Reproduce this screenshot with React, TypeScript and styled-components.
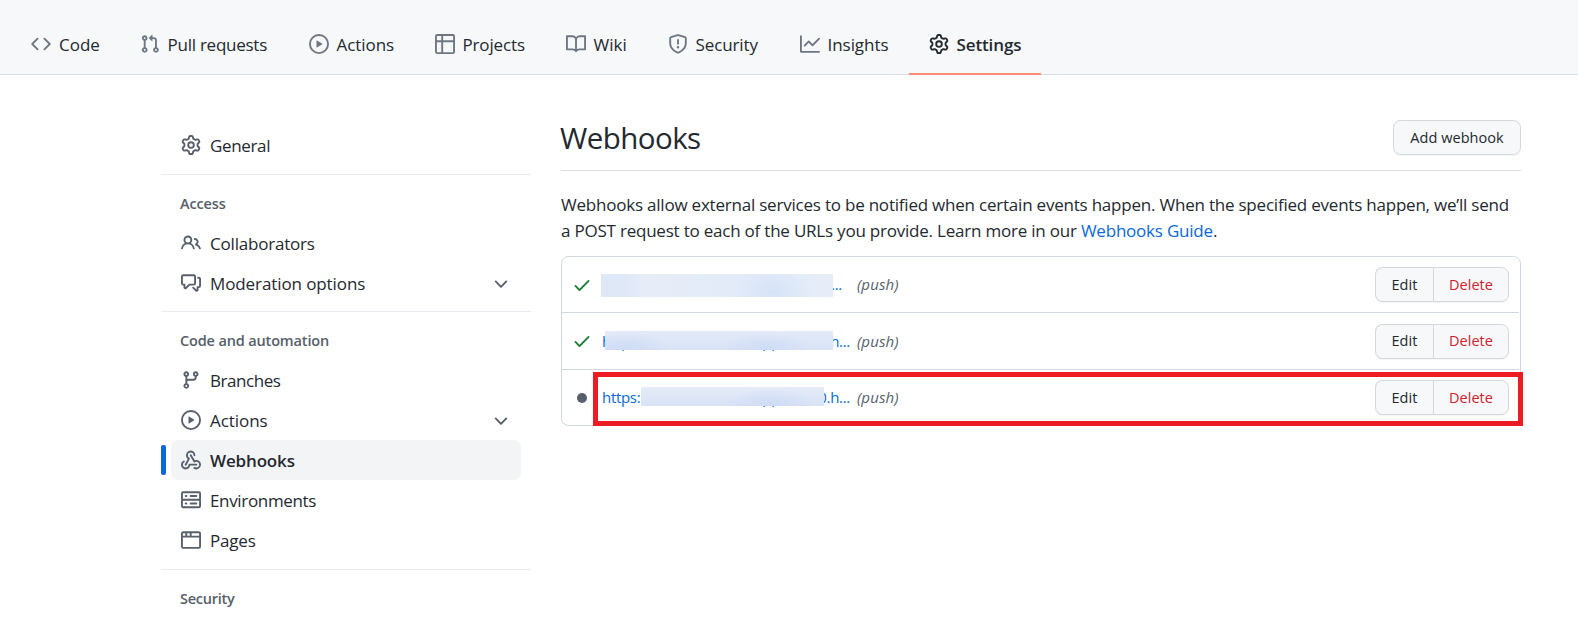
import React from "react";
import styled, { createGlobalStyle, css } from "styled-components";

const GlobalStyle = createGlobalStyle`
  *, *::before, *::after { box-sizing: border-box; }
  body {
    margin: 0;
    background: #fff;
    color: #24292f;
    font-family: "Open Sans", "Noto Sans", sans-serif;
    font-size: 17px;
    font-weight: 400;
  }
`;

/* ---------- icons ---------- */

const paths = {
  code: "M4.72 3.22a.75.75 0 011.06 1.06L2.06 8l3.72 3.72a.75.75 0 11-1.06 1.06L.47 8.53a.75.75 0 010-1.06l4.25-4.25zm6.56 0a.75.75 0 10-1.06 1.06L13.94 8l-3.72 3.72a.75.75 0 101.06 1.06l4.25-4.25a.75.75 0 000-1.06l-4.25-4.25z",
  pull: "M7.177 3.073L9.573.677A.25.25 0 0110 .854v4.792a.25.25 0 01-.427.177L7.177 3.427a.25.25 0 010-.354zM3.75 2.5a.75.75 0 100 1.5.75.75 0 000-1.5zm-2.25.75a2.25 2.25 0 113 2.122v5.256a2.251 2.251 0 11-1.5 0V5.372A2.25 2.25 0 011.5 3.25zM11 2.5h-1V4h1a1 1 0 011 1v5.628a2.251 2.251 0 101.5 0V5A2.5 2.5 0 0011 2.5zm1 10.25a.75.75 0 111.5 0 .75.75 0 01-1.5 0zM3.75 12a.75.75 0 100 1.5.75.75 0 000-1.5z",
  play: "M1.5 8a6.5 6.5 0 1113 0 6.5 6.5 0 01-13 0zM8 0a8 8 0 100 16A8 8 0 008 0zM6.379 5.227A.25.25 0 006 5.442v5.117a.25.25 0 00.379.214l4.264-2.559a.25.25 0 000-.428L6.379 5.227z",
  table: "M1.75 0A1.75 1.75 0 000 1.75v12.5C0 15.216.784 16 1.75 16h12.5A1.75 1.75 0 0016 14.25V1.75A1.75 1.75 0 0014.25 0H1.75zM1.5 6.5v7.75c0 .138.112.25.25.25H5v-8H1.5zM6.5 6.5v8h7.75a.25.25 0 00.25-.25V6.5h-8zM14.5 5V1.75a.25.25 0 00-.25-.25H6.5V5h8zM5 5V1.5H1.75a.25.25 0 00-.25.25V5H5z",
  book: "M0 1.75A.75.75 0 01.75 1h4.253c1.227 0 2.317.59 3 1.501A3.744 3.744 0 0111.006 1h4.245a.75.75 0 01.75.75v10.5a.75.75 0 01-.75.75h-4.507a2.25 2.25 0 00-1.591.659l-.622.621a.75.75 0 01-1.06 0l-.622-.621A2.25 2.25 0 005.258 13H.75a.75.75 0 01-.75-.75V1.75zm8.755 3a2.25 2.25 0 012.25-2.25H14.5v9h-3.757c-.71 0-1.4.201-1.992.572l.004-7.322zm-1.504 7.324l.004-5.073-.002-2.253A2.25 2.25 0 005.003 2.5H1.5v9h3.757a3.75 3.75 0 011.994.574z",
  shield: "M7.467.133a1.75 1.75 0 011.066 0l5.25 1.68A1.75 1.75 0 0115 3.48V7c0 1.566-.32 3.182-1.303 4.682-.983 1.498-2.585 2.813-5.032 3.855a1.7 1.7 0 01-1.33 0c-2.447-1.042-4.049-2.357-5.032-3.855C1.32 10.182 1 8.566 1 7V3.48a1.75 1.75 0 011.217-1.667l5.25-1.68zm.61 1.429a.25.25 0 00-.153 0l-5.25 1.68a.25.25 0 00-.174.238V7c0 1.358.275 2.666 1.057 3.86.784 1.194 2.121 2.34 4.366 3.297a.2.2 0 00.154 0c2.245-.956 3.582-2.104 4.366-3.298C13.225 9.666 13.5 8.36 13.5 7V3.48a.25.25 0 00-.174-.237l-5.25-1.68zM9 10.5a1 1 0 11-2 0 1 1 0 012 0zm-.25-5.75a.75.75 0 10-1.5 0v3a.75.75 0 001.5 0v-3z",
  graph: "M1.5 1.75a.75.75 0 00-1.5 0v12.5c0 .414.336.75.75.75h14.5a.75.75 0 000-1.5H1.5V1.75zm14.28 2.53a.75.75 0 00-1.06-1.06L10 7.94 7.53 5.47a.75.75 0 00-1.06 0L3.22 8.72a.75.75 0 001.06 1.06L7 7.06l2.47 2.47a.75.75 0 001.06 0l5.25-5.25z",
  gear: "M7.429 1.525a6.593 6.593 0 011.142 0c.036.003.108.036.137.146l.289 1.105c.147.56.55.967.997 1.189.174.086.341.183.501.29.417.278.97.423 1.53.27l1.102-.303c.11-.03.175.016.195.046.219.31.41.641.573.989.014.031.022.11-.059.19l-.815.806c-.411.406-.562.957-.53 1.456a4.588 4.588 0 010 .582c-.032.499.119 1.05.53 1.456l.815.806c.08.08.073.159.059.19a6.494 6.494 0 01-.573.99c-.02.029-.086.074-.195.045l-1.103-.303c-.559-.153-1.112-.008-1.529.27-.16.107-.327.204-.5.29-.449.222-.851.628-.998 1.189l-.289 1.105c-.029.11-.101.143-.137.146a6.613 6.613 0 01-1.142 0c-.036-.003-.108-.037-.137-.146l-.289-1.105c-.147-.56-.55-.967-.997-1.189a4.502 4.502 0 01-.501-.29c-.417-.278-.97-.423-1.53-.27l-1.102.303c-.11.03-.175-.016-.195-.046a6.492 6.492 0 01-.573-.989c-.014-.031-.022-.11.059-.19l.815-.806c.411-.406.562-.957.53-1.456a4.587 4.587 0 010-.582c.032-.499-.119-1.05-.53-1.456l-.815-.806c-.08-.08-.073-.159-.059-.19a6.44 6.44 0 01.573-.99c.02-.029.086-.075.195-.045l1.103.303c.559.153 1.112.008 1.529-.27.16-.107.327-.204.5-.29.449-.222.851-.628.998-1.189l.289-1.105c.029-.11.101-.143.137-.146zM8 0c-.236 0-.47.01-.701.03-.743.065-1.29.615-1.458 1.261l-.29 1.106c-.017.066-.078.158-.211.224a5.994 5.994 0 00-.668.386c-.123.082-.233.09-.3.071L3.27 2.776c-.644-.177-1.392.02-1.82.63a7.977 7.977 0 00-.704 1.217c-.315.675-.111 1.422.363 1.891l.815.806c.05.048.098.147.088.294a6.084 6.084 0 000 .772c.01.147-.038.246-.088.294l-.815.806c-.474.469-.678 1.216-.363 1.891.2.428.436.835.704 1.218.428.609 1.176.806 1.82.63l1.103-.303c.066-.019.176-.011.299.071.213.143.436.272.668.386.133.066.194.158.212.224l.289 1.106c.169.646.715 1.196 1.458 1.26a8.094 8.094 0 001.402 0c.743-.064 1.29-.614 1.458-1.26l.29-1.106c.017-.066.078-.158.211-.224a5.98 5.98 0 00.668-.386c.123-.082.233-.09.3-.071l1.102.302c.644.177 1.392-.02 1.82-.63.268-.382.505-.789.704-1.217.315-.675.111-1.422-.364-1.891l-.814-.806c-.05-.048-.098-.147-.088-.294a6.1 6.1 0 000-.772c-.01-.147.039-.246.088-.294l.814-.806c.475-.469.679-1.216.364-1.891a7.992 7.992 0 00-.704-1.218c-.428-.609-1.176-.806-1.82-.63l-1.103.303c-.066.019-.176.011-.299-.071a5.991 5.991 0 00-.668-.386c-.133-.066-.194-.158-.212-.224L10.16 1.29C9.99.645 9.444.095 8.701.031A8.094 8.094 0 008 0zm1.5 8a1.5 1.5 0 11-3 0 1.5 1.5 0 013 0zM11 8a3 3 0 11-6 0 3 3 0 016 0z",
  people: "M5.5 3.5a2 2 0 100 4 2 2 0 000-4zM2 5.5a3.5 3.5 0 115.898 2.549 5.507 5.507 0 013.034 4.084.75.75 0 11-1.482.235 4.001 4.001 0 00-7.9 0 .75.75 0 01-1.482-.236A5.507 5.507 0 013.102 8.05 3.49 3.49 0 012 5.5zM11 4a.75.75 0 100 1.5 1.5 1.5 0 01.666 2.844.75.75 0 00-.416.672v.352a.75.75 0 00.574.73c1.2.289 2.162 1.2 2.522 2.372a.75.75 0 101.434-.44 5.01 5.01 0 00-2.56-3.012A3 3 0 0011 4z",
  discussion: "M1.5 2.75a.25.25 0 01.25-.25h8.5a.25.25 0 01.25.25v5.5a.25.25 0 01-.25.25h-3.5a.75.75 0 00-.53.22L3.5 11.44V9.25a.75.75 0 00-.75-.75h-1a.25.25 0 01-.25-.25v-5.5zM1.75 1A1.75 1.75 0 000 2.75v5.5C0 9.216.784 10 1.75 10H2v1.543a1.457 1.457 0 002.487 1.03L7.061 10h3.189A1.75 1.75 0 0012 8.25v-5.5A1.75 1.75 0 0010.25 1h-8.5zM14.5 4.75a.25.25 0 00-.25-.25h-.5a.75.75 0 110-1.5h.5c.966 0 1.75.784 1.75 1.75v5.5A1.75 1.75 0 0114.25 12H14v1.543a1.457 1.457 0 01-2.487 1.03L9.22 12.28a.75.75 0 111.06-1.06l2.22 2.22v-2.19a.75.75 0 01.75-.75h1a.25.25 0 00.25-.25v-5.5z",
  branch: "M11.75 2.5a.75.75 0 100 1.5.75.75 0 000-1.5zm-2.25.75a2.25 2.25 0 113 2.122V6A2.5 2.5 0 0110 8.5H6a1 1 0 00-1 1v1.128a2.251 2.251 0 11-1.5 0V5.372a2.25 2.25 0 111.5 0v1.836A2.492 2.492 0 016 7h4a1 1 0 001-1v-.628A2.25 2.25 0 019.5 3.25zM4.25 12a.75.75 0 100 1.5.75.75 0 000-1.5zM3.5 3.25a.75.75 0 111.5 0 .75.75 0 01-1.5 0z",
  webhook: "M5.5 4.25a2.25 2.25 0 014.5 0 .75.75 0 001.5 0 3.75 3.75 0 10-6.14 2.889l-2.272 4.258a.75.75 0 001.324.706L7 7.25a.75.75 0 00-.309-1.015A2.25 2.25 0 015.5 4.25zM7.364 3.607a.75.75 0 011.03.257l2.608 4.349a3.75 3.75 0 11-.628 6.785.75.75 0 01.752-1.299 2.25 2.25 0 10-.033-3.88.75.75 0 01-1.03-.256L7.107 4.636a.75.75 0 01.257-1.03zM2.9 8.776A.75.75 0 012.625 9.8 2.25 2.25 0 106 11.75a.75.75 0 01.75-.751h5.5a.75.75 0 010 1.5H7.425a3.751 3.751 0 11-5.55-3.998.75.75 0 011.024.274z",
  server: "M1.75 1A1.75 1.75 0 000 2.75v4c0 .372.116.717.314 1a1.742 1.742 0 00-.314 1v4c0 .966.784 1.75 1.75 1.75h12.5A1.75 1.75 0 0016 12.75v-4c0-.372-.116-.717-.314-1 .198-.283.314-.628.314-1v-4A1.75 1.75 0 0014.25 1H1.75zm0 7.5a.25.25 0 00-.25.25v4c0 .138.112.25.25.25h12.5a.25.25 0 00.25-.25v-4a.25.25 0 00-.25-.25H1.75zM1.5 2.75a.25.25 0 01.25-.25h12.5a.25.25 0 01.25.25v4a.25.25 0 01-.25.25H1.75a.25.25 0 01-.25-.25v-4zm5.5 2A.75.75 0 017.75 4h4.5a.75.75 0 010 1.5h-4.5A.75.75 0 017 4.75zM7.75 10a.75.75 0 000 1.5h4.5a.75.75 0 000-1.5h-4.5zM3 4.75A.75.75 0 013.75 4h.5a.75.75 0 010 1.5h-.5A.75.75 0 013 4.75zM3.75 10a.75.75 0 000 1.5h.5a.75.75 0 000-1.5h-.5z",
  browser: "M0 2.75C0 1.784.784 1 1.75 1h12.5c.966 0 1.75.784 1.75 1.75v10.5A1.75 1.75 0 0114.25 15H1.75A1.75 1.75 0 010 13.25V2.75zm1.75-.25a.25.25 0 00-.25.25V4.5h2v-2H1.75zM5 2.5v2h2v-2H5zm3.5 0v2h6V2.75a.25.25 0 00-.25-.25H8.5zm6 3.5h-13v7.25c0 .138.112.25.25.25h12.5a.25.25 0 00.25-.25V6z",
  chevron: "M12.78 6.22a.75.75 0 010 1.06l-4.25 4.25a.75.75 0 01-1.06 0L3.22 7.28a.75.75 0 011.06-1.06L8 9.94l3.72-3.72a.75.75 0 011.06 0z",
  check: "M13.78 4.22a.75.75 0 010 1.06l-7.25 7.25a.75.75 0 01-1.06 0L2.22 9.28a.75.75 0 011.06-1.06L6 10.94l6.72-6.72a.75.75 0 011.06 0z",
  dot: "M8 4a4 4 0 100 8 4 4 0 000-8z",
};
type IconName = keyof typeof paths;

const Svg = styled.svg`
  display: block;
  flex: none;
  width: 20px;
  height: 20px;
  fill: currentColor;
`;

const Icon = ({ name }: { name: IconName }) => (
  <Svg viewBox="0 0 16 16" aria-hidden="true">
    <path fillRule="evenodd" d={paths[name]} />
  </Svg>
);

/* ---------- top navigation ---------- */

const TopNav = styled.nav`
  display: flex;
  height: 75px;
  padding: 14px 0 0 11px;
  background: #f6f8fa;
  border-bottom: 1px solid #d8dee4;
`;

const Tab = styled.a<{ $active?: boolean }>`
  display: flex;
  align-items: center;
  gap: 8px;
  height: 61px;
  padding: 0 20px;
  border-bottom: 2px solid ${(p) => (p.$active ? "#fd8c73" : "transparent")};
  font-weight: ${(p) => (p.$active ? 600 : 400)};
  ${Svg} {
    color: ${(p) => (p.$active ? "#24292f" : "#6e7781")};
  }
`;

const TabLabel = styled.span<{ $width: number; $track: number }>`
  width: ${(p) => p.$width}px;
  padding-top: 2px;
  white-space: nowrap;
  letter-spacing: ${(p) => p.$track}px;
  line-height: 26px;
`;

/* ---------- page ---------- */

const Page = styled.div`
  display: flex;
  gap: 30px;
  padding: 0 57px 0 161px;
  height: 551px;
  overflow: hidden;
`;

const Sidebar = styled.aside`
  flex: none;
  width: 370px;
  padding-top: 50px;
`;

const Group = styled.section`
  padding-bottom: 9px;
  & + & {
    border-top: 1px solid #e7ebef;
  }
  &:nth-child(2) {
    padding-bottom: 8px;
  }
`;

const GroupTitle = styled.h3<{ $track: number }>`
  margin: 0;
  height: 48px;
  padding: 18px 20px 0 19px;
  font-size: 14.5px;
  line-height: 22px;
  font-weight: 600;
  color: #57606a;
  letter-spacing: ${(p) => p.$track}px;
`;

const NavItem = styled.a<{ $active?: boolean; $track: number }>`
  position: relative;
  display: flex;
  align-items: center;
  gap: 9px;
  height: 40px;
  margin: 0 10px;
  padding: 0 10px;
  border-radius: 7.5px;
  letter-spacing: ${(p) => p.$track}px;
  ${Svg} {
    color: #57606a;
  }
  ${(p) =>
    p.$active &&
    css`
      background: #f3f4f6;
      font-weight: 600;
      &::before {
        content: "";
        position: absolute;
        left: -10px;
        top: 5px;
        width: 5px;
        height: 30px;
        border-radius: 2px;
        background: #0969da;
      }
    `}
`;

const NavLabel = styled.span`
  flex: 1;
  padding-top: 1px;
  line-height: 26px;
`;

const Main = styled.main`
  flex: 1;
  min-width: 0;
  padding-top: 45px;
`;

const Heading = styled.header`
  display: flex;
  justify-content: space-between;
  height: 51px;
  border-bottom: 1px solid #d8dee4;
`;

const Title = styled.h1`
  margin: 0 0 0 -1px;
  font-size: 29.5px;
  line-height: 35px;
  font-weight: 400;
  letter-spacing: -0.55px;
`;

const Button = styled.button<{ $danger?: boolean; $width: number }>`
  width: ${(p) => p.$width}px;
  height: 35px;
  padding: 0;
  border: 1px solid #d5d8da;
  border-radius: 7.5px;
  background: #f6f8fa;
  box-shadow: 0 1px 0 rgba(27, 31, 36, 0.04);
  color: ${(p) => (p.$danger ? "#cf222e" : "#24292f")};
  font: 500 14.5px/22px "Open Sans", "Noto Sans", sans-serif;
  letter-spacing: 0.05px;
`;

const ButtonGroup = styled.div`
  display: flex;
  ${Button}:first-child {
    border-radius: 7.5px 0 0 7.5px;
    border-right: 0;
  }
  ${Button}:last-child {
    border-radius: 0 7.5px 7.5px 0;
  }
`;

const Intro = styled.p`
  margin: 21px 0 12px;
  line-height: 26px;
  letter-spacing: -0.215px;
  white-space: nowrap;
`;

const Link = styled.a`
  color: #0969da;
`;

const HookList = styled.div`
  position: relative;
  height: 170px;
  border: 1px solid #d0d7de;
  border-radius: 7.5px;
`;

const HookRow = styled.div`
  display: flex;
  align-items: center;
  height: 55px;
  margin-right: 1px;
  padding: 0 10px;
  & + & {
    height: 57px;
    border-top: 1px solid #d0d7de;
  }
  & + & + & {
    height: 56px;
  }
`;

const Status = styled.span<{ $ok: boolean }>`
  display: flex;
  width: 30px;
  color: ${(p) => (p.$ok ? "#1a7f37" : "#57606a")};
`;

const HookUrl = styled.a`
  position: relative;
  display: flex;
  width: 248px;
  margin: 0 7px 1px 0;
  font-size: 15px;
  line-height: 22px;
  letter-spacing: -0.3px;
  color: #0969da;
`;

const UrlMiddle = styled.span`
  flex: 1;
  padding-left: 122px;
`;

const UrlEnd = styled.span<{ $tail: number }>`
  margin-right: ${(p) => p.$tail}px;
`;

const Redaction = styled.span<{ $left: number; $width: number; $top: number; $height: number; $fill: string }>`
  position: absolute;
  left: ${(p) => p.$left}px;
  top: ${(p) => p.$top}px;
  width: ${(p) => p.$width}px;
  height: ${(p) => p.$height}px;
  background: ${(p) => p.$fill};
`;

const EventName = styled.em`
  flex: 1;
  margin-bottom: 1px;
  font-size: 15px;
  line-height: 22px;
  letter-spacing: 0.1px;
  color: #57606a;
`;

const Highlight = styled.div`
  position: absolute;
  left: 31px;
  top: 115px;
  width: 930px;
  height: 54px;
  border: 5px solid #ed1c24;
`;

const tabs: { icon: IconName; label: string; width: number; track: number; active?: boolean }[] = [
  { icon: "code", label: "Code", width: 40.5, track: 0 },
  { icon: "pull", label: "Pull requests", width: 101, track: -0.25 },
  { icon: "play", label: "Actions", width: 58, track: -0.05 },
  { icon: "table", label: "Projects", width: 63, track: -0.15 },
  { icon: "book", label: "Wiki", width: 34, track: 0 },
  { icon: "shield", label: "Security", width: 64, track: -0.12 },
  { icon: "graph", label: "Insights", width: 61, track: -0.05 },
  { icon: "gear", label: "Settings", width: 64, track: -0.12, active: true },
];

type Item = { icon: IconName; label: string; track: number; active?: boolean; expandable?: boolean };
const groups: { title?: string; track?: number; items: Item[] }[] = [
  { items: [{ icon: "gear", label: "General", track: -0.35 }] },
  {
    title: "Access",
    track: -0.15,
    items: [
      { icon: "people", label: "Collaborators", track: -0.2 },
      { icon: "discussion", label: "Moderation options", track: -0.1, expandable: true },
    ],
  },
  {
    title: "Code and automation",
    track: -0.15,
    items: [
      { icon: "branch", label: "Branches", track: -0.45 },
      { icon: "play", label: "Actions", track: -0.05, expandable: true },
      { icon: "webhook", label: "Webhooks", track: -0.15, active: true },
      { icon: "server", label: "Environments", track: -0.34 },
      { icon: "browser", label: "Pages", track: -0.2 },
    ],
  },
  { title: "Security", track: -0.25, items: [] },
];

const hooks = [
  {
    ok: true,
    start: "", middle: "", end: "...", tail: 8,
    left: -1, width: 232, top: 1, height: 23,
    fill: "radial-gradient(ellipse 40px 26px at 74% 75%, rgba(212,226,247,.9), rgba(212,226,247,0)), linear-gradient(90deg, #dfe8f7 0%, #dfe8f7 10%, #e6ecf8 18%, #e3ebf8 62%, #e6edf8 100%)",
  },
  {
    ok: true,
    start: "https:", middle: "pp", end: "0.h...", tail: 0,
    left: 3, width: 228, top: 1.5, height: 19,
    fill: "radial-gradient(ellipse 46px 16px at 71% 90%, rgba(205,219,246,.9), rgba(205,219,246,0)), radial-gradient(ellipse 46px 16px at 9% 90%, rgba(205,219,246,.9), rgba(205,219,246,0)), linear-gradient(180deg, #e3ebf8, #d9e3f6)",
  },
  {
    ok: false,
    start: "https:", middle: "pp", end: "0.h...", tail: 0,
    left: 39, width: 183, top: 1, height: 19,
    fill: "radial-gradient(ellipse 46px 16px at 71% 90%, rgba(205,219,246,.9), rgba(205,219,246,0)), linear-gradient(180deg, #e5ecf8, #d9e3f6)",
  },
];

export default function App() {
  return (
    <>
      <GlobalStyle />
      <TopNav>
        {tabs.map((t) => (
          <Tab key={t.label} $active={t.active}>
            <Icon name={t.icon} />
            <TabLabel $width={t.width} $track={t.track}>{t.label}</TabLabel>
          </Tab>
        ))}
      </TopNav>
      <Page>
        <Sidebar>
          {groups.map((g, i) => (
            <Group key={i}>
              {g.title && <GroupTitle $track={g.track ?? 0}>{g.title}</GroupTitle>}
              {g.items.map((it) => (
                <NavItem key={it.label} $active={it.active} $track={it.track}>
                  <Icon name={it.icon} />
                  <NavLabel>{it.label}</NavLabel>
                  {it.expandable && <Icon name="chevron" />}
                </NavItem>
              ))}
            </Group>
          ))}
        </Sidebar>
        <Main>
          <Heading>
            <Title>Webhooks</Title>
            <Button $width={128}>Add webhook</Button>
          </Heading>
          <Intro>
            Webhooks allow external services to be notified when certain events happen. When the specified events happen, we’ll send
            <br />a POST request to each of the URLs you provide. Learn more in our <Link>Webhooks Guide</Link>.
          </Intro>
          <HookList>
            {hooks.map((h, i) => (
              <HookRow key={i}>
                <Status $ok={h.ok}>
                  <Icon name={h.ok ? "check" : "dot"} />
                </Status>
                <HookUrl>
                  <span>{h.start}</span>
                  <UrlMiddle>{h.middle}</UrlMiddle>
                  <UrlEnd $tail={h.tail}>{h.end}</UrlEnd>
                  <Redaction $left={h.left} $width={h.width} $top={h.top} $height={h.height} $fill={h.fill} />
                </HookUrl>
                <EventName>(push)</EventName>
                <ButtonGroup>
                  <Button $width={58}>Edit</Button>
                  <Button $width={76} $danger>Delete</Button>
                </ButtonGroup>
              </HookRow>
            ))}
            <Highlight />
          </HookList>
        </Main>
      </Page>
    </>
  );
}
